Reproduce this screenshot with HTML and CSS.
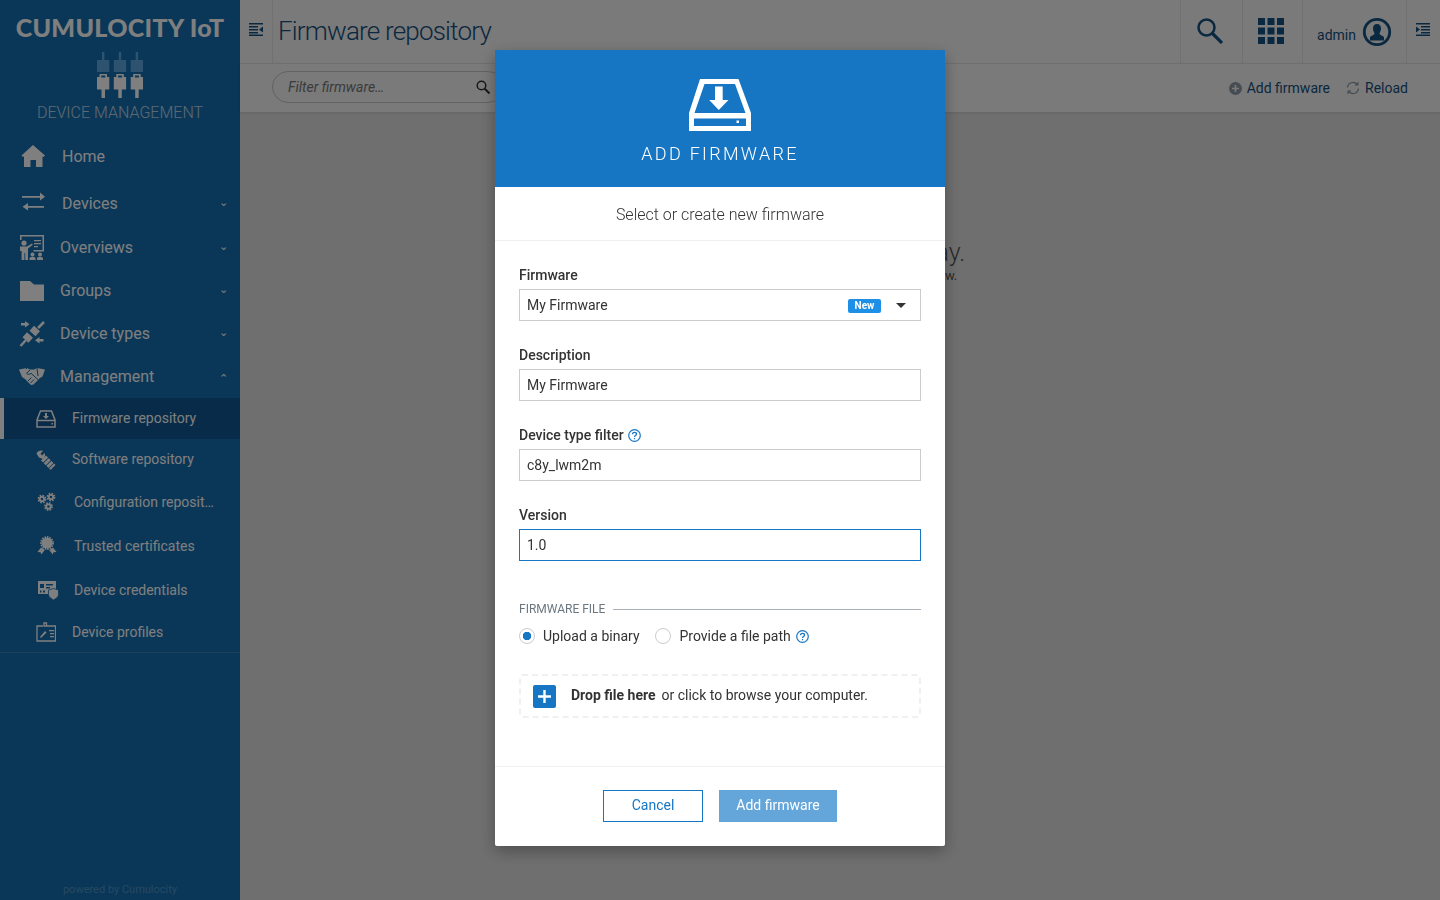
FILE: index.html
```html
<!DOCTYPE html>
<html lang="en">
<head>
  <meta charset="UTF-8">
  <title>Firmware repository - Device Management</title>
  <link rel="stylesheet" href="styles.css">
</head>
<body>
  <div class="app">
    <aside class="sidebar">
      <div class="brand">
        <div class="brand-name">CUMULOCITY IoT</div>
        <svg class="brand-icon" width="46" height="46" viewBox="0 0 46 46">
          <g fill="#5ca6e2">
            <path d="M5 0h2.400v8h4.900v12H0V8h5z"/>
            <path transform="translate(16.800)" d="M5 0h2.400v8h4.900v12H0V8h5z"/>
            <path transform="translate(33.700)" d="M5 0h2.400v8h4.900v12H0V8h5z"/>
          </g>
          <g fill="#fff" fill-rule="evenodd">
            <path d="M2.500 22H10v3h2.300v12.500H8V46H4.500v-8.500H0V25h2.500zM4.300 23.500v2h4v-2z"/>
            <path transform="translate(16.800)" d="M2.500 22H10v3h2.300v12.500H8V46H4.500v-8.500H0V25h2.500zM4.300 23.500v2h4v-2z"/>
            <path transform="translate(33.700)" d="M2.500 22H10v3h2.300v12.500H8V46H4.500v-8.500H0V25h2.500zM4.300 23.500v2h4v-2z"/>
          </g>
        </svg>
        <div class="brand-app">DEVICE MANAGEMENT</div>
      </div>

      <nav class="nav">
        <a class="nav-item row-47">
          <svg class="nav-icon" width="26" height="24" viewBox="0 0 26 24"><path fill="currentColor" d="M13 0 1.500 10.500 3 12l1-.8V22h6.500v-7h5.500v7h6.500V11.200l1 .8 1.500-1.500z"/></svg>
          <span class="nav-text">Home</span>
        </a>
        <a class="nav-item row-46">
          <svg class="nav-icon" width="26" height="24" viewBox="0 0 26 24"><path fill="currentColor" d="M2 5h18V1.500L25 5.700 20 9.500V6.800H2zM24 15H8v-3l-5.500 3.700L8 19.400v-2.600h16z"/></svg>
          <span class="nav-text">Devices</span>
          <span class="caret">&#8964;</span>
        </a>
        <a class="nav-item">
          <svg class="nav-icon nav-icon-tight" width="26" height="26" viewBox="0 0 26 26"><path fill="currentColor" fill-rule="evenodd" d="M1 0h24v16.500H14.500V15h9V1.500H2.500V5H1zM5 5.500a2.600 2.600 0 1 1 0 5.200 2.600 2.600 0 0 1 0-5.200zM1 11.500h7l5-3 .8 1.300L9 13.500V25H6.200v-7H5.400v7H2.600V16H1zM15 5h7v1.300h-7zM15 8h7v1.300h-7zM15 11h4v1.300h-4zM13.500 17.500a2 2 0 1 1 0 4 2 2 0 0 1 0-4zM21 17.500a2 2 0 1 1 0 4 2 2 0 0 1 0-4zM10.500 25v-1.500c0-1 1-1.800 3-1.800s3 .8 3 1.800V25zM18 25v-1.500c0-1 1-1.800 3-1.800s3 .8 3 1.800V25z"/></svg>
          <span class="nav-text">Overviews</span>
          <span class="caret caret-high">&#8964;</span>
        </a>
        <a class="nav-item">
          <svg class="nav-icon nav-icon-tight" width="26" height="20" viewBox="0 0 26 20"><path fill="currentColor" d="M1 0h10l4 3.500h10V20H1z"/></svg>
          <span class="nav-text">Groups</span>
          <span class="caret caret-high">&#8964;</span>
        </a>
        <a class="nav-item">
          <svg class="nav-icon nav-icon-tight" width="26" height="26" viewBox="0 0 26 26">
            <g stroke="currentColor" fill="none">
              <path stroke-width="8" d="m13.500 12.500 4.500-5"/>
              <path stroke-width="2.500" d="m19 7 6-6"/>
              <path stroke-width="8" d="m11 14-4.500 5"/>
              <path stroke-width="2.500" d="m7 19-5.500 6"/>
            </g>
            <path fill="currentColor" d="M2 2h4V0l4.500 3.200L6 6.500V4.500H2zM24.500 18h-4v-2L16 19.200l4.500 3.300v-2h4z"/>
          </svg>
          <span class="nav-text">Device types</span>
          <span class="caret caret-high">&#8964;</span>
        </a>
        <a class="nav-item">
          <svg class="nav-icon nav-icon-tight" width="26" height="20" viewBox="0 0 26 20">
            <path fill="currentColor" d="M0 2.500 8 1l3 1.500h4L18 1l8 1.500-2.500 7-2.500 1.500-6.500 6.500-2.500.5-6-6-3-2z"/>
            <path fill="none" stroke="#146eb0" stroke-width="1" d="M11 3 7.500 6.300c1 1.500 3 1.200 4.500 0l7.500 6.700M15 12.500l-3.500 3.500M12.500 10.500 9 14M8 1l-1 1M18 1l1 8"/>
          </svg>
          <span class="nav-text">Management</span>
          <span class="caret caret-up">&#8963;</span>
        </a>
        <a class="nav-item row-41 sub-item sub-active">
          <svg class="sub-icon" width="20" height="18" viewBox="0 0 20 18"><path fill="none" stroke="currentColor" stroke-width="1.500" d="M4.500 1h11L19 10v7H1v-7zM1 10.500h18"/><path fill="currentColor" d="M9 3h2v3h2l-3 3-3-3h2zM15.500 13h1.500v1.500h-1.500z"/></svg>
          <span class="nav-text">Firmware repository</span>
        </a>
        <a class="nav-item row-41 sub-item">
          <svg class="sub-icon" width="20" height="20" viewBox="0 0 20 20">
            <path fill="currentColor" d="M.5 3.500c1-2.500 4.500-3.500 6.500-2.500L4.500 3.500 6 5.500 8.500 3c1.200 2.500 0 5-1.500 6L3 7.500z"/>
            <path fill="none" stroke="currentColor" stroke-width="7" stroke-dasharray="3 .8" d="m7.500 8 9.500 9.500"/>
          </svg>
          <span class="nav-text">Software repository</span>
        </a>
        <a class="nav-item row-44 sub-item sub-wide">
          <svg class="sub-icon" width="20" height="20" viewBox="0 0 20 20">
            <g fill="none" stroke="currentColor">
              <circle cx="5" cy="7" r="2.200" stroke-width="1.800"/>
              <circle cx="5" cy="7" r="3.500" stroke-width="1.800" stroke-dasharray="1.600 1.150"/>
              <circle cx="14" cy="5" r="2.200" stroke-width="1.800"/>
              <circle cx="14" cy="5" r="3.500" stroke-width="1.800" stroke-dasharray="1.600 1.150"/>
              <circle cx="11.500" cy="14.500" r="2.200" stroke-width="1.800"/>
              <circle cx="11.500" cy="14.500" r="3.500" stroke-width="1.800" stroke-dasharray="1.600 1.150"/>
            </g>
          </svg>
          <span class="nav-text">Configuration reposit…</span>
        </a>
        <a class="nav-item row-44 sub-item sub-wide">
          <svg class="sub-icon" width="20" height="20" viewBox="0 0 20 20">
            <circle cx="10" cy="7" r="5.500" fill="currentColor"/>
            <circle cx="10" cy="7" r="6" fill="none" stroke="currentColor" stroke-width="1.800" stroke-dasharray="1.500 1"/>
            <path fill="currentColor" d="M4 11.500 .5 16l3 .3.800 2.200 3.500-4.500zM16 11.500l3.500 4.500-3 .3-.8 2.200-3.500-4.500z"/>
          </svg>
          <span class="nav-text">Trusted certificates</span>
        </a>
        <a class="nav-item row-44 sub-item sub-wide">
          <svg class="sub-icon sub-icon-over" width="20" height="20" viewBox="0 0 20 20">
            <path fill="currentColor" fill-rule="evenodd" d="M1 1h18v13H1zM3 4v4h4V4zM9 4v1.500h7V4zM9 7v1.500h4V7zM3 10.500v2h1.500v-2zM6 10.500v2h2v-2z"/>
            <path fill="currentColor" stroke="#146eb0" stroke-width=".8" d="m16.500 8.500 5 1.500v4.500c0 2.500-2.500 4-5 5.500-2.500-1.500-5-3-5-5.500V10z"/>
          </svg>
          <span class="nav-text">Device credentials</span>
        </a>
        <a class="nav-item row-40 sub-item">
          <svg class="sub-icon" width="20" height="20" viewBox="0 0 20 20"><path fill="none" stroke="currentColor" stroke-width="1.300" d="M1 4h18.500v15H1z"/><path fill="#146eb0" d="M7 2h4v4H7z"/><path fill="none" stroke="currentColor" stroke-width="1.300" d="M8 1h2.500v3H8z"/><path fill="currentColor" d="m4 15 5-6 1.500 1.500-5.500 5.500zM13 8h5v1.300h-5zM14 11h4v1.300h-4zM14 14h4v1.300h-4z"/></svg>
          <span class="nav-text">Device profiles</span>
        </a>
      </nav>
      <div class="powered">powered by Cumulocity</div>
    </aside>

    <main class="main">
      <header class="topbar">
        <button class="bar-toggle">
          <svg width="14" height="13" viewBox="0 0 14 13"><path fill="currentColor" d="M0 0h14v1.500H0zM0 3h9v1.500H0zM0 6h9v1.500H0zM0 9h9v1.500H0zM0 11.500h14V13H0zM14 3.500v6L10 6.500z"/></svg>
        </button>
        <h1 class="page-title">Firmware repository</h1>
        <div class="bar-cell cell-search">
          <svg width="26" height="26" viewBox="0 0 26 26"><circle cx="9.500" cy="9.500" r="8" fill="none" stroke="currentColor" stroke-width="2.500"/><path d="m15 15 10 10" stroke="currentColor" stroke-width="3.200"/></svg>
        </div>
        <div class="bar-cell cell-apps">
          <svg width="26" height="26" viewBox="0 0 26 26"><path fill="currentColor" d="M0 0h7v7H0zM9.500 0h7v7h-7zM19 0h7v7h-7zM0 9.500h7v7H0zM9.500 9.500h7v7h-7zM19 9.500h7v7h-7zM0 19h7v7H0zM9.500 19h7v7h-7zM19 19h7v7h-7z"/></svg>
        </div>
        <div class="bar-cell cell-user">
          <span class="user-name">admin</span>
          <svg width="30" height="30" viewBox="0 0 30 30"><circle cx="15" cy="15" r="12.700" fill="none" stroke="currentColor" stroke-width="2.800"/><path fill="currentColor" d="M15 7c2.600 0 4 2 4 4.500 0 2-1 3.500-1.500 5 0 1.500 3 2 4.500 3.500v3.500H8V20c1.500-1.500 4.500-2 4.500-3.500-.5-1.500-1.500-3-1.500-5C11 9 12.400 7 15 7z"/></svg>
        </div>
        <button class="bar-toggle bar-toggle-right">
          <svg width="14" height="13" viewBox="0 0 14 13"><path fill="currentColor" d="M0 0h14v1.500H0zM5 3h9v1.500H5zM5 6h9v1.500H5zM5 9h9v1.500H5zM0 11.500h14V13H0zM0 3.500v6L4 6.500z"/></svg>
        </button>
      </header>

      <div class="toolbar">
        <div class="filter">
          <span class="filter-text">Filter firmware…</span>
          <svg width="14" height="14" viewBox="0 0 14 14"><circle cx="5.500" cy="5.500" r="4.300" fill="none" stroke="currentColor" stroke-width="1.500"/><path d="m8.500 8.500 5 5" stroke="currentColor" stroke-width="2"/></svg>
        </div>
        <div class="actions">
          <a class="action">
            <svg class="action-icon" width="13" height="13" viewBox="0 0 13 13"><circle cx="6.500" cy="6.500" r="6.500" fill="#8b9aa6"/><path fill="#f4f4f4" d="M5.700 3h1.600v2.700H10v1.600H7.300V10H5.700V7.300H3V5.700h2.700z"/></svg>
            Add firmware
          </a>
          <a class="action">
            <svg class="action-icon" width="14" height="14" viewBox="0 0 14 14"><path fill="none" stroke="#8b9aa6" stroke-width="1.300" d="M1.500 6.500A5.500 5.500 0 0 1 11 3.200M12.500 7.500A5.500 5.500 0 0 1 3 10.800"/><path fill="#8b9aa6" d="M12.500 .5v4h-4zM1.500 13.500v-4h4z"/></svg>
            Reload
          </a>
        </div>
      </div>

      <div class="empty">
        <p class="empty-title">No firmware to display.</p>
        <p class="empty-text">Add new firmware with the button below.</p>
      </div>
    </main>
  </div>

  <div class="backdrop">
    <section class="modal">
      <div class="modal-head">
        <svg width="62" height="52" viewBox="0 0 62 52">
          <path fill="#fff" fill-rule="evenodd" d="M11 0h38.500L62 34v18H0V34zM15.500 5 5.500 34h51L46 5zM5 39.500V47h52v-7.500z"/>
          <path fill="#fff" d="M26 7.500h7.700V21h5.800l-9.700 10L20.200 21H26zM47.500 41.500h2.500V44h-2.500z"/>
        </svg>
        <h2 class="modal-title">ADD FIRMWARE</h2>
      </div>
      <div class="modal-sub">Select or create new firmware</div>

      <form class="modal-form">
        <div class="field">
          <label class="field-label">Firmware</label>
          <div class="input select-box">
            <span>My Firmware</span>
            <span class="tag">New</span>
            <span class="select-arrow"></span>
          </div>
        </div>
        <div class="field">
          <label class="field-label">Description</label>
          <div class="input">My Firmware</div>
        </div>
        <div class="field">
          <label class="field-label">Device type filter
            <svg class="help" width="13" height="13" viewBox="0 0 13 13"><circle cx="6.500" cy="6.500" r="5.800" fill="none" stroke="currentColor" stroke-width="1.200"/><path fill="none" stroke="currentColor" stroke-width="1.300" d="M4.500 5.200c0-1.200 1-1.900 2-1.900 1.200 0 2 .7 2 1.700 0 1.500-2 1.500-2 3"/><path fill="currentColor" d="M5.900 9h1.200v1.200H5.900z"/></svg>
          </label>
          <div class="input">c8y_lwm2m</div>
        </div>
        <div class="field">
          <label class="field-label">Version</label>
          <div class="input input-focus">1.0</div>
        </div>

        <div class="legend"><span>FIRMWARE FILE</span></div>
        <div class="radios">
          <span class="radio radio-on"></span><span class="radio-label">Upload a binary</span>
          <span class="radio radio-second"></span><span class="radio-label radio-label-last">Provide a file path</span>
          <svg class="help" width="13" height="13" viewBox="0 0 13 13"><circle cx="6.500" cy="6.500" r="5.800" fill="none" stroke="currentColor" stroke-width="1.200"/><path fill="none" stroke="currentColor" stroke-width="1.300" d="M4.500 5.200c0-1.200 1-1.900 2-1.900 1.200 0 2 .7 2 1.700 0 1.500-2 1.500-2 3"/><path fill="currentColor" d="M5.900 9h1.200v1.200H5.900z"/></svg>
        </div>
        <div class="dropzone">
          <span class="drop-plus"><svg width="13" height="13" viewBox="0 0 13 13"><path fill="#fff" d="M5.300 0h2.400v5.300H13v2.400H7.700V13H5.300V7.700H0V5.300h5.300z"/></svg></span>
          <b>Drop file here</b>
          <span>or click to browse your computer.</span>
        </div>
      </form>

      <div class="modal-foot">
        <button class="btn btn-cancel">Cancel</button>
        <button class="btn btn-primary">Add firmware</button>
      </div>
    </section>
  </div>
</body>
</html>
```
FILE: styles.css
```css
* {
  box-sizing: border-box;
}
html, body {
  height: 100%;
}
body {
  margin: 0;
  overflow: hidden;
  font-family: Roboto, sans-serif;
  font-size: 14px;
  color: #333;
  background: #dedede;
}
.app {
  display: flex;
  height: 900px;
}

/* sidebar */
.sidebar {
  width: 240px;
  flex-shrink: 0;
  display: flex;
  flex-direction: column;
  background: #146eb0;
  color: #fff;
}
.brand {
  height: 133px;
  padding-top: 12px;
  display: flex;
  flex-direction: column;
  align-items: center;
}
.brand-name {
  font-family: Lato, sans-serif;
  font-weight: 900;
  font-size: 25px;
  line-height: 30px;
  letter-spacing: .3px;
  white-space: nowrap;
}
.brand-icon {
  display: block;
  margin-top: 10px;
}
.brand-app {
  margin-top: 5px;
  font-weight: 300;
  font-size: 16px;
  line-height: 20px;
  opacity: .7;
}
.nav {
  border-bottom: 1px solid #3a85bd;
}
.nav-item {
  height: 43px;
  display: flex;
  align-items: center;
  padding-left: 20px;
  font-size: 16px;
}
.row-47 { height: 47px; }
.row-46 { height: 46px; }
.row-44 { height: 44px; }
.row-41 { height: 41px; }
.row-40 { height: 40px; }
.nav-icon {
  flex-shrink: 0;
  margin-right: 16px;
}
.nav-icon-tight {
  margin-left: -1px;
  margin-right: 15px;
}
.nav-text {
  white-space: nowrap;
}
.caret {
  margin-left: auto;
  margin-right: 12px;
  width: 10px;
  font-size: 11px;
  line-height: 10px;
  text-align: center;
}
.caret-high {
  margin-bottom: 2px;
}
.caret-up {
  margin-top: 4px;
}
.sub-item {
  padding-left: 36px;
  font-size: 14px;
}
.row-41 .nav-text {
  margin-bottom: 2px;
}
.sub-icon {
  flex-shrink: 0;
  margin-right: 16px;
}
.sub-icon-over {
  overflow: visible;
}
.sub-wide {
  padding-left: 37px;
}
.sub-wide .sub-icon {
  margin-right: 17px;
}
.sub-active {
  background: #0e5690;
  border-left: 4px solid #fff;
  padding-left: 32px;
}
.powered {
  margin-top: auto;
  padding-bottom: 3px;
  text-align: center;
  font-size: 11px;
  line-height: 14px;
  color: #4d93c6;
}

/* top bar */
.main {
  flex: 1;
  min-width: 0;
  display: flex;
  flex-direction: column;
}
.topbar {
  height: 64px;
  display: flex;
  align-items: center;
  background: #f4f4f4;
  border-bottom: 1px solid #e2e2e2;
  color: #14507f;
}
.bar-toggle {
  width: 33px;
  height: 63px;
  padding: 0 0 1px;
  border: none;
  border-right: 1px solid #e2e2e2;
  background: none;
  color: #14507f;
}
.bar-toggle-right {
  width: 34px;
  border-right: none;
  border-left: 1px solid #e2e2e2;
  padding-right: 2px;
}
.page-title {
  flex: 1;
  margin: 0 0 2px 5px;
  font-weight: 300;
  font-size: 26px;
  letter-spacing: -.8px;
}
.bar-cell {
  height: 63px;
  display: flex;
  align-items: center;
  justify-content: center;
  border-left: 1px solid #e2e2e2;
}
.cell-search {
  width: 62px;
  padding: 0 4px 1px 0;
}
.cell-apps {
  width: 60px;
  padding: 0 4px 1px 0;
}
.cell-user {
  width: 104px;
  gap: 6px;
  padding-left: 1px;
}
.user-name {
  margin: 6px 0 0 -1px;
  font-size: 14px;
}

/* toolbar */
.toolbar {
  height: 48px;
  display: flex;
  align-items: center;
  justify-content: space-between;
  padding: 0 32px;
  background: #f4f4f4;
  box-shadow: 0 1px 3px rgba(0, 0, 0, .1);
}
.filter {
  width: 232px;
  height: 32px;
  margin-bottom: 2px;
  display: flex;
  align-items: center;
  justify-content: space-between;
  padding: 0 13px 0 15px;
  border: 1px solid #c4c4c4;
  border-radius: 16px;
  color: #333;
}
.filter-text {
  font-style: italic;
  color: #777;
}
.actions {
  display: flex;
  gap: 16px;
  color: #14507f;
}
.action {
  display: flex;
  align-items: center;
  gap: 5px;
}

/* empty state */
.empty {
  padding-top: 126px;
  text-align: center;
  color: #555;
}
.empty-title {
  margin: 0;
  font-weight: 300;
  font-size: 25px;
  line-height: 29px;
}
.empty-text {
  margin: 0;
  font-size: 13px;
  line-height: 18px;
}

/* modal */
.backdrop {
  position: fixed;
  inset: 0;
  padding-top: 50px;
  display: flex;
  justify-content: center;
  align-items: flex-start;
  background: rgba(0, 0, 0, .5);
}
.modal {
  width: 450px;
  height: 796px;
  display: flex;
  flex-direction: column;
  background: #fff;
  border-radius: 2px;
  box-shadow: 0 5px 15px rgba(0, 0, 0, .3);
}
.modal-head {
  height: 137px;
  padding-top: 29px;
  display: flex;
  flex-direction: column;
  align-items: center;
  background: #1776c4;
  color: #fff;
}
.modal-title {
  margin: 11px 0 0;
  font-weight: 300;
  font-size: 18px;
  line-height: 24px;
  letter-spacing: 2.3px;
}
.modal-sub {
  height: 54px;
  padding-top: 1px;
  display: flex;
  align-items: center;
  justify-content: center;
  border-bottom: 1px solid #f0f0f0;
  font-weight: 300;
  font-size: 16px;
}
.modal-form {
  flex: 1;
  padding: 24px 24px 0;
}
.field {
  height: 80px;
}
.field-label {
  display: block;
  height: 24px;
  font-weight: 500;
  font-size: 14px;
  line-height: 20px;
}
.help {
  vertical-align: -2px;
  margin-left: 1px;
  color: #1776c4;
}
.input {
  height: 32px;
  display: flex;
  align-items: center;
  padding: 0 7px;
  border: 1px solid #ccc;
  font-size: 14px;
}
.input-focus {
  border-color: #1776c4;
}
.select-box span:first-child {
  flex: 1;
}
.tag {
  width: 33px;
  height: 14px;
  margin: 2px 15px 0 0;
  background: #1e8fe6;
  border-radius: 2px;
  color: #fff;
  font-weight: 700;
  font-size: 10px;
  line-height: 14px;
  text-align: center;
}
.select-arrow {
  width: 0;
  height: 0;
  margin-right: 7px;
  border-left: 5px solid transparent;
  border-right: 5px solid transparent;
  border-top: 5px solid #333;
}
.legend {
  margin-top: 16px;
  display: flex;
  align-items: center;
  gap: 8px;
  font-size: 12px;
  line-height: 16px;
  color: #6b7780;
}
.legend::after {
  content: "";
  flex: 1;
  border-top: 1px solid #aab0b5;
}
.radios {
  margin-top: 9px;
  display: flex;
  align-items: center;
  height: 20px;
}
.radio {
  width: 16px;
  height: 16px;
  border: 1px solid #ccc;
  border-radius: 50%;
  margin-right: 8px;
  background: #fff;
}
.radio-second {
  margin-right: 9px;
}
.radio-on {
  background: radial-gradient(circle, #1776c4 0 4px, #fff 4.500px);
}
.radio-label {
  margin-right: 15px;
}
.radio-label-last {
  margin-right: 4px;
}
.dropzone {
  margin-top: 28px;
  height: 44px;
  display: flex;
  align-items: center;
  padding: 0 0 2px 12px;
  border: 2px dashed #f0f0f0;
  border-radius: 3px;
}
.drop-plus {
  width: 23px;
  height: 23px;
  margin: 3px 15px 0 0;
  display: flex;
  align-items: center;
  justify-content: center;
  background: #1776c4;
  border-radius: 2px;
}
.dropzone b {
  font-weight: 700;
  margin-right: 6px;
}
.modal-foot {
  height: 80px;
  padding-bottom: 2px;
  display: flex;
  align-items: center;
  justify-content: center;
  gap: 16px;
  border-top: 1px solid #f0f0f0;
}
.btn {
  height: 32px;
  padding: 0 0 1px;
  font-family: inherit;
  font-size: 14px;
}
.btn-cancel {
  width: 100px;
  background: #fff;
  border: 1px solid #1776c4;
  color: #1776c4;
}
.btn-primary {
  width: 118px;
  background: #64a5da;
  border: none;
  color: #fff;
}
```
